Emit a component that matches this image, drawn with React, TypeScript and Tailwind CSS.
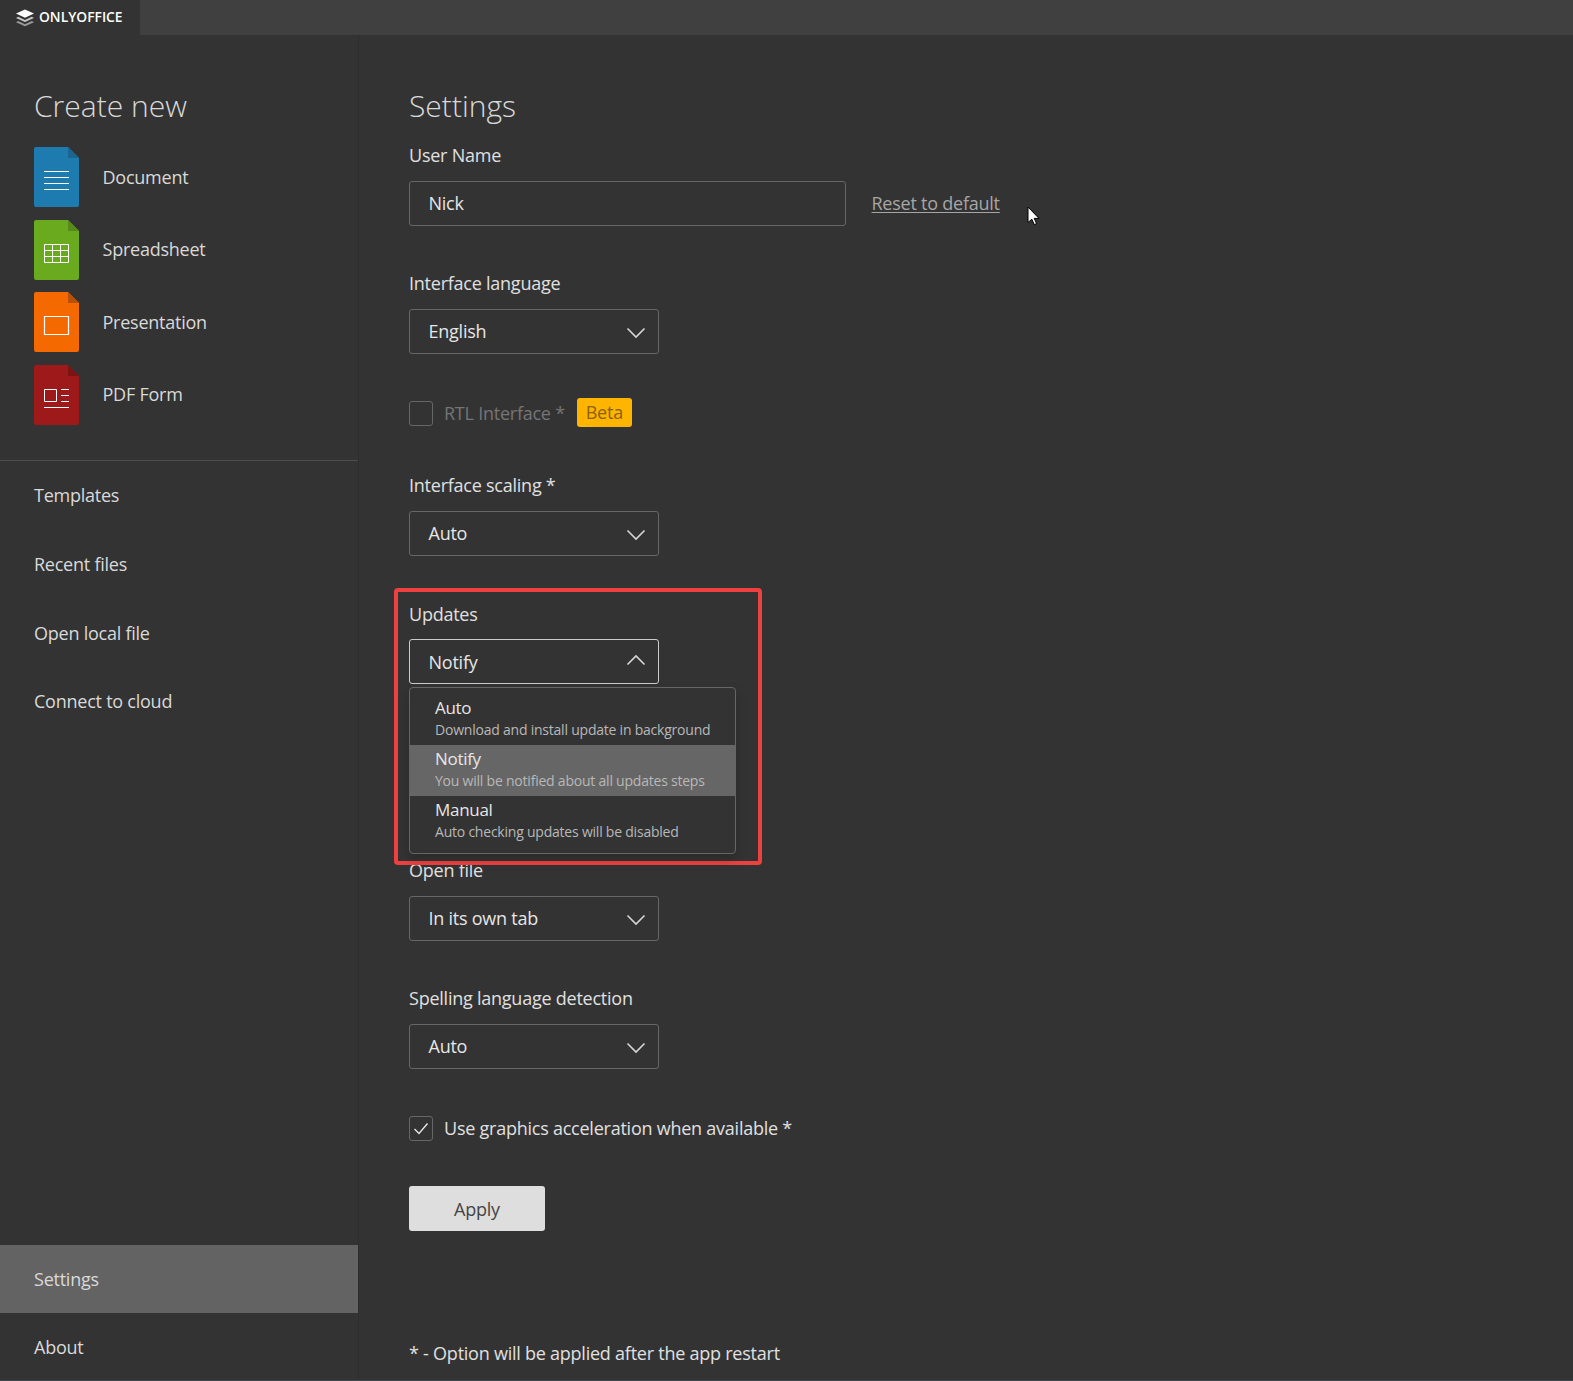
const font = "font-['Open_Sans',sans-serif]"

function DocIcon({ body, fold, children }: { body: string; fold: string; children: React.ReactNode }) {
  return (
    <svg width="46" height="60" viewBox="0 0 46 60" className="shrink-0">
      <path d="M2 0H34L45 11V58a2 2 0 0 1-2 2H2a2 2 0 0 1-2-2V2a2 2 0 0 1 2-2z" fill={body} />
      <path d="M34 0L45 11H34z" fill={fold} />
      <g stroke="#fff" fill="none" strokeWidth="1">{children}</g>
    </svg>
  )
}

function Chevron({ up }: { up?: boolean }) {
  return (
    <svg width="20" height="12" viewBox="0 0 20 12" className={`absolute right-[12px] ${up ? "top-[14px]" : "top-[17px]"}`}>
      <path d={up ? "M1.5 10.5L10 2l8.5 8.5" : "M1.5 1.5L10 10l8.5-8.5"} fill="none" stroke="#d6d6d6" strokeWidth="1.6" />
    </svg>
  )
}

function Select({ value, up }: { value: string; up?: boolean }) {
  return (
    <div className={`relative flex h-[45px] w-[250px] items-center rounded-[3px] border pl-[18.5px] text-[18px] text-[#e6e6e6] ${up ? "border-[#cccccc] pt-[2px]" : "border-[#666666]"}`}>
      {value}
      <Chevron up={up} />
    </div>
  )
}

function CreateItem({ label, icon }: { label: string; icon: React.ReactNode }) {
  return (
    <div className="flex h-[60px] items-center gap-[22.5px]">
      {icon}
      <span className="text-[18px] text-[#d9d9d9]">{label}</span>
    </div>
  )
}

function NavItem({ label, active, short }: { label: string; active?: boolean; short?: boolean }) {
  return (
    <div className={`flex items-center pl-[34px] text-[18px] text-[#d9d9d9] ${short ? "h-[68px]" : "h-[68.75px]"} ${active ? "bg-[#636363]" : ""}`}>
      {label}
    </div>
  )
}

function Option({ title, desc, active }: { title: string; desc: string; active?: boolean }) {
  return (
    <div className={`h-[51px] pl-[25px] ${active ? "bg-[#666666]" : ""}`}>
      <div className="h-[26px] pt-[1px] text-[17px] leading-[26px] tracking-[-0.3px] text-[#e6e6e6]">{title}</div>
      <div className="text-[14px] leading-[20px] tracking-[-0.22px] text-[#b8b8b8]">{desc}</div>
    </div>
  )
}

function Label({ children, className = "" }: { children: React.ReactNode; className?: string }) {
  return <div className={`h-[26px] text-[18px] leading-[26px] text-[#e0e0e0] ${className}`}>{children}</div>
}

export default function App() {
  return (
    <div className={`${font} relative flex h-[1381px] w-[1573px] flex-col overflow-hidden bg-[#333333] tracking-[-0.24px]`}>
      <div className="flex h-[35px] shrink-0 bg-[#404040]">
        <div className="flex w-[140px] items-center gap-[4px] bg-[#333333] pl-[15px]">
          <svg width="20" height="18" viewBox="0 0 20 18">
            <path d="M10 0.5L19 4.6 10 8.7 1 4.6z" fill="#fff" />
            <path d="M3.2 7.8L1 8.9 10 13l9-4.1-2.2-1.1L10 10.9z" fill="#c8c8c8" />
            <path d="M3.2 12.1L1 13.2 10 17.3l9-4.1-2.2-1.1L10 15.2z" fill="#9a9a9a" />
          </svg>
          <span className="text-[13.8px] font-semibold tracking-normal text-white">ONLYOFFICE</span>
        </div>
      </div>

      <div className="flex min-h-0 flex-1">
        <aside className="flex w-[359px] shrink-0 flex-col border-r border-[#2e2e2e]">
          <div className="border-b border-[#4d4d4d] pb-[35.75px] pl-[34px] pt-[49px]">
            <div className="mb-[19px] h-[44px] text-[30px] font-light leading-[44px] tracking-normal text-[#d9d9d9]">Create new</div>
            <div className="flex flex-col gap-[12.5px]">
              <CreateItem
                label="Document"
                icon={
                  <DocIcon body="#1e7bb0" fold="#1a6691">
                    <path d="M10 24.5H35M10 30.5H35M10 36.5H35M10 42.5H35" />
                  </DocIcon>
                }
              />
              <CreateItem
                label="Spreadsheet"
                icon={
                  <DocIcon body="#6aaa1f" fold="#568a19">
                    <path d="M10.5 24.5H34.5V42.5H10.5zM10.5 30.5H34.5M10.5 36.5H34.5M18.5 24.5V42.5M26.5 24.5V42.5" />
                  </DocIcon>
                }
              />
              <CreateItem
                label="Presentation"
                icon={
                  <DocIcon body="#f56a00" fold="#b85000">
                    <path d="M10.5 24.5H34.5V42.5H10.5z" strokeWidth="1.2" />
                  </DocIcon>
                }
              />
              <CreateItem
                label="PDF Form"
                icon={
                  <DocIcon body="#9e1a1a" fold="#7c1414">
                    <path d="M10.5 24.5H22.5V36.5H10.5zM27 24.5H35M27 30.5H35M27 36.5H35M10 42.5H35" />
                  </DocIcon>
                }
              />
            </div>
          </div>
          <div className="flex flex-1 flex-col">
            <NavItem label="Templates" />
            <NavItem label="Recent files" />
            <NavItem label="Open local file" />
            <NavItem label="Connect to cloud" />
            <div className="flex-1" />
            <NavItem label="Settings" active short />
            <NavItem label="About" short />
          </div>
        </aside>

        <main className="flex-1 pl-[50px] pt-[49px]">
          <div className="h-[44px] text-[30px] font-light leading-[44px] tracking-normal text-[#d9d9d9]">Settings</div>

          <Label className="mt-[14px]">User Name</Label>
          <div className="mt-[13px] flex items-center">
            <div className="flex h-[45px] w-[437px] items-center rounded-[3px] border border-[#666666] pl-[18.5px] text-[18px] text-[#e6e6e6]">Nick</div>
            <span className="relative ml-[25.5px] text-[18px] text-[#a6a6a6] underline underline-offset-2">
              Reset to default
              <svg width="14" height="20" viewBox="0 0 14 20" className="absolute left-[155px] top-[16px]">
                <path d="M1 1V16.5L4.8 13.2 7.3 18.6 9.6 17.5 7.2 12.4H12z" fill="#fff" stroke="#000" strokeWidth="1" />
              </svg>
            </span>
          </div>

          <Label className="mt-[44px]">Interface language</Label>
          <div className="mt-[13px]"><Select value="English" /></div>

          <div className="mt-[46px] flex h-[27px] items-center">
            <div className="h-[25px] w-[24px] rounded-[3px] border border-[#666666]" />
            <span className="ml-[11px] text-[18px] text-[#757575]">RTL Interface *</span>
            <span className="mb-[2px] ml-[12px] flex h-[29px] w-[55px] items-center justify-center rounded-[3px] bg-[#ffb400] text-[18px] text-[#8a6200]">Beta</span>
          </div>

          <Label className="mt-[45px]">Interface scaling *</Label>
          <div className="mt-[13px]"><Select value="Auto" /></div>

          <div className="relative mt-[45px]">
            <Label>Updates</Label>
            <div className="mt-[12px]"><Select value="Notify" up /></div>
            <div className="pointer-events-none absolute left-[-15px] top-[-13px] h-[277px] w-[368px] rounded-[4px] border-[4px] border-[#ef4040]" />
            <div className="absolute left-0 top-[86px] z-10 w-[327px] overflow-hidden rounded-[4px] border border-[#666666] bg-[#333333] pb-[6px] pt-[6px] shadow-[0_6px_12px_rgba(0,0,0,0.18)]">
              <Option title="Auto" desc="Download and install update in background" />
              <Option title="Notify" desc="You will be notified about all updates steps" active />
              <Option title="Manual" desc="Auto checking updates will be disabled" />
            </div>
          </div>

          <Label className="mt-[173px]">Open file</Label>
          <div className="mt-[13px]"><Select value="In its own tab" /></div>

          <Label className="mt-[44px]">Spelling language detection</Label>
          <div className="mt-[13px]"><Select value="Auto" /></div>

          <div className="mt-[46px] flex h-[27px] items-center">
            <div className="flex h-[25px] w-[24px] items-center justify-center rounded-[3px] border border-[#666666]">
              <svg width="16" height="13" viewBox="0 0 16 13">
                <path d="M1.5 7L6 11.5 14.5 1.5" fill="none" stroke="#e6e6e6" strokeWidth="1.4" />
              </svg>
            </div>
            <span className="ml-[11px] text-[18px] text-[#e0e0e0]">Use graphics acceleration when available *</span>
          </div>

          <div className="mt-[44px] flex h-[45px] w-[136px] items-center justify-center rounded-[3px] bg-[#dedede] pt-[2px] text-[18px] text-[#444444]">Apply</div>

          <div className="mt-[109px] h-[26px] text-[18px] leading-[26px] text-[#e0e0e0]">* - Option will be applied after the app restart</div>
        </main>
      </div>
      <div className="absolute inset-x-0 bottom-0 h-px bg-[#3b4652]" />
    </div>
  )
}
